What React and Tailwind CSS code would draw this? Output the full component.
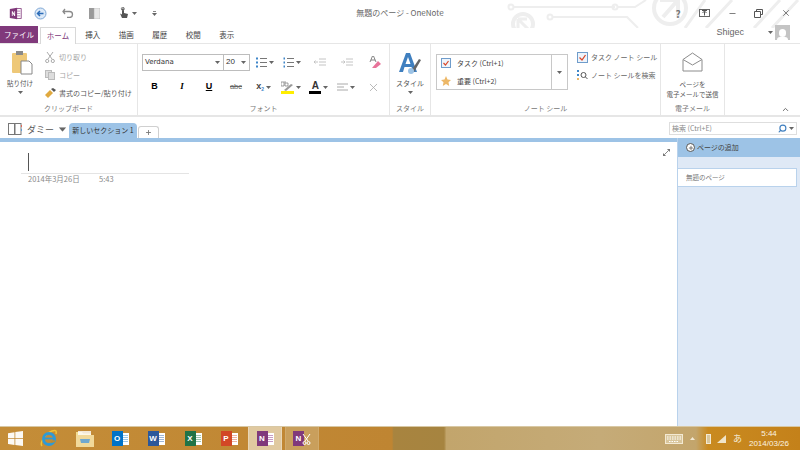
import React from 'react';
import { ChevronUp, Plus, X, Minus, Search } from 'lucide-react';

const Caret = ({ className = '' }) => (
  <svg width="5" height="3" viewBox="0 0 5 3" className={className}><path d="M0 0h5L2.500 3z" fill="#666" /></svg>
);

// circuit style decoration behind the title bar
const Circuit = () => (
  <svg className="absolute left-[480px] top-0 pointer-events-none" width="320" height="28" viewBox="0 0 320 28" fill="none" stroke="#eeeeee" strokeWidth="2">
    <circle cx="31" cy="7" r="2.500" />
    <path d="M34 7h101" />
    <circle cx="43" cy="24" r="10" strokeWidth="4" />
    <path d="M38 19h9M38 19v9M38 19l11 11" strokeWidth="3" />
    <circle cx="70" cy="17" r="2.500" />
    <path d="M73 17h74l11 11" />
    <circle cx="135" cy="7" r="2.500" />
    <path d="M138 7h17l11 -7" />
    <circle cx="190" cy="8" r="16" strokeWidth="4" />
    <path d="M180 0h18v18M198 0l-15 17" strokeWidth="4" />
    <path d="M225 0l-20 28M252 0l-26 28M300 0l-26 28M318 0l-26 28" strokeWidth="3" />
  </svg>
);

const OneNoteIcon = ({ size = 14 }) => (
  <svg width={size} height={size} viewBox="0 0 16 16">
    <rect x="8" y="2" width="7" height="12" fill="#fff" stroke="#80397b" strokeWidth="1" />
    <path d="M10 5h4M10 8h4M10 11h4" stroke="#c79cc5" strokeWidth="1.400" />
    <path d="M1 2.500l9-1.500v14l-9-1.500z" fill="#80397b" />
    <path d="M3.500 11V5.200h1l2 3.400V5.200h1V11h-1l-2-3.400V11z" fill="#fff" />
  </svg>
);

const TitleBar = () => (
  <div className="relative h-[26px] flex items-center">
    <Circuit />
    <div className="relative flex items-center w-[170px] h-full">
      <div className="w-[30px] flex justify-center"><OneNoteIcon size={13} /></div>
      <svg width="13" height="13" viewBox="0 0 13 13" className="ml-[4px]">
        <circle cx="6.500" cy="6.500" r="5.500" fill="#dce9f7" stroke="#7fa8d6" />
        <path d="M9.500 6.500H4M6 4L3.500 6.500 6 9" stroke="#2b6cb8" strokeWidth="1.500" fill="none" />
      </svg>
      <svg width="12" height="10" viewBox="0 0 12 10" className="ml-[15px]">
        <path d="M3 1L1 3.500 3 6M1 3.500h6.500a3 3 0 0 1 0 6H5" stroke="#8a8a8a" strokeWidth="1.300" fill="none" />
      </svg>
      <svg width="11" height="11" viewBox="0 0 11 11" className="ml-[15px]">
        <rect x="0" y="0" width="5" height="11" fill="#9a9a9a" />
        <rect x="5" y="0" width="6" height="11" fill="#e8e8e8" stroke="#aaa" strokeWidth="0.500" />
      </svg>
      <svg width="12" height="12" viewBox="0 0 12 12" className="ml-[18px]">
        <path d="M4 1.500v6L2 6.500 4 11h5l1-4-4-1V1.500z" fill="#555" />
        <circle cx="4.800" cy="1.800" r="1.500" fill="none" stroke="#777" />
      </svg>
      <Caret className="ml-[2px]" />
      <div className="ml-[15px] flex flex-col items-center gap-px">
        <div className="w-[3px] h-px bg-[#888]" />
        <Caret />
      </div>
    </div>
    <div className="relative flex-1 text-center text-[8px] text-[#666] whitespace-nowrap">無題のページ - OneNote</div>
    <div className="relative flex items-center justify-end w-[170px] h-full text-[#555]">
      <span className="w-[20px] text-center text-[10px] font-bold text-[#777] mr-[11px]">?</span>
      <svg width="11" height="8" viewBox="0 0 11 8" className="mr-[18px]">
        <rect x="0.500" y="0.500" width="10" height="7" fill="none" stroke="#666" />
        <path d="M5.500 6.500V2.500M3.500 4l2-2 2 2M3 1.500h5" stroke="#555" fill="none" />
      </svg>
      <Minus size={9} strokeWidth={2} className="mr-[17px] text-[#555]" />
      <svg width="9" height="9" viewBox="0 0 9 9" className="mr-[18px]">
        <path d="M2.500 2.500V.5h6v5h-2M.5 2.500h6v6h-6z" fill="none" stroke="#555" />
      </svg>
      <X size={10} strokeWidth={1.600} className="mr-[9px] text-[#444]" />
    </div>
  </div>
);

const Tabs = () => (
  <div className="relative h-[17px] flex items-end text-[7.500px] text-[#444]">
    <div className="w-[38px] h-[17px] bg-[#80397b] text-white flex items-center justify-center">ファイル</div>
    <div className="ml-[2px] w-[36px] h-[17px] bg-white border border-b-0 border-[#d8d8d8] text-[#80397b] flex items-center justify-center z-10 -mb-px">ホーム</div>
    {['挿入', '描画', '履歴', '校閲', '表示'].map((t) => (
      <div key={t} className="w-[33.500px] text-center h-[17px] flex items-center justify-center">{t}</div>
    ))}
    <div className="absolute right-[10px] -top-[1px] flex items-center text-[9px] text-[#666] font-['Liberation_Sans',sans-serif]">
      <span>Shigec</span>
      <Caret className="ml-[24px]" />
      <div className="ml-[2px] w-[15px] h-[15px] bg-[#c4c4c4] flex flex-col items-center justify-end overflow-hidden">
        <div className="w-[7px] h-[8px] rounded-full bg-white" />
        <div className="w-[11px] h-[3px] bg-white rounded-t" />
      </div>
    </div>
  </div>
);

const Group = ({ width, label, children }) => (
  <div style={{ width }} className="h-full border-r border-[#e6e6e6] flex flex-col shrink-0">
    <div className="flex-1 relative min-h-0">{children}</div>
    <div className="h-[12px] text-center text-[7px] text-[#777] leading-[11px] whitespace-nowrap">{label}</div>
  </div>
);

const SmallBtn = ({ icon, children, className = '' }) => (
  <div className={`flex items-center gap-[3px] h-[18px] text-[7px] whitespace-nowrap ${className}`}>
    <div className="w-[12px] flex justify-center">{icon}</div>
    <span>{children}</span>
  </div>
);

const Clipboard = () => (
  <Group width={138} label="クリップボード">
    <div className="flex h-full pt-[7px]">
      <div className="w-[40px] flex flex-col items-center text-[#555]">
        <svg width="22" height="24" viewBox="0 0 22 24" className="ml-[4px]">
          <rect x="1" y="2" width="15" height="20" fill="#eec878" rx="1" />
          <rect x="5" y="0" width="7" height="4" fill="#8a8a8a" />
          <path d="M10 10h8l3 3v10H10z" fill="#fff" stroke="#888" />
        </svg>
        <span className="text-[6.500px] mt-[4px] leading-[9px] whitespace-nowrap">貼り付け</span>
        <Caret className="mt-[3px]" />
      </div>
      <div className="flex flex-col ml-[4px] -mt-[3px]">
        <SmallBtn className="text-[#a5a5a5]" icon={
          <svg width="10" height="11" viewBox="0 0 10 11" fill="none" stroke="#aaa"><path d="M2 0l5 7M8 0L3 7" /><circle cx="2.200" cy="9" r="1.600" /><circle cx="7.800" cy="9" r="1.600" /></svg>
        }>切り取り</SmallBtn>
        <SmallBtn className="text-[#a5a5a5]" icon={
          <svg width="10" height="10" viewBox="0 0 10 10" fill="#ddd" stroke="#bbb"><rect x="0.500" y="0.500" width="6" height="7" /><rect x="3.500" y="2.500" width="6" height="7" /></svg>
        }>コピー</SmallBtn>
        <SmallBtn className="text-[#555]" icon={
          <svg width="11" height="10" viewBox="0 0 11 10"><path d="M0 7l5-5 3 3-5 5z" fill="#e0a93f" /><path d="M6 1l3 3 2-2-3-2z" fill="#555" /></svg>
        }>書式のコピー/貼り付け</SmallBtn>
      </div>
    </div>
  </Group>
);

const Cell = ({ children, caret }) => (
  <div className="w-[27.500px] h-[18px] flex items-center justify-center gap-[2px] text-[#444]">
    {children}
    {caret && <Caret />}
  </div>
);

const Bullets = ({ num }) => (
  <svg width="11" height="11" viewBox="0 0 11 11">
    {[1.500, 5.500, 9.500].map((y) => (
      <g key={y}>
        <rect x={num ? 0.500 : 0} y={y - 1} width={num ? 1.500 : 2} height="2" fill="#3f86c9" />
        <path d={`M4 ${y}h7`} stroke="#777" />
      </g>
    ))}
  </svg>
);

const Indent = ({ right }) => (
  <svg width="12" height="8" viewBox="0 0 12 8" stroke="#c4c4c4" fill="none">
    <path d="M5 1h7M5 4h7M5 7h7" />
    {right ? <path d="M0 4h4M2.500 2.500L4 4 2.500 5.500" /> : <path d="M4 4H0M1.500 2.500L0 4l1.500 1.500" />}
  </svg>
);

const Font = () => (
  <Group width={252} label="フォント">
    <div className="pt-[9px] pl-[4px]">
      <div className="flex items-center h-[18px]">
        <div className="w-[82px] h-[17px] border border-[#bdbdbd] flex items-center justify-between px-[2px] text-[7px] text-[#333] font-['DejaVu_Sans',sans-serif]">
          <span>Verdana</span><Caret className="mr-[1px]" />
        </div>
        <div className="w-[26px] h-[17px] border border-l-0 border-[#bdbdbd] flex items-center justify-between px-[2px] text-[8px] text-[#333] font-['Liberation_Sans',sans-serif]">
          <span>20</span><Caret className="mr-[1px]" />
        </div>
        <div className="ml-[1px] flex">
          <Cell caret><Bullets /></Cell>
          <Cell caret><Bullets num /></Cell>
          <Cell><Indent /></Cell>
          <Cell><Indent right /></Cell>
          <Cell>
            <svg width="12" height="12" viewBox="0 0 12 12">
              <path d="M3 12l6-7 3 3-5 4z" fill="#e8739a" />
              <path d="M1 6l2.500-6h1L7 6M2 4h4" stroke="#666" fill="none" strokeWidth="0.800" />
            </svg>
          </Cell>
        </div>
      </div>
      <div className="flex items-center mt-[7px] -ml-[1px] font-['Liberation_Sans',sans-serif]">
        <div className="flex w-[109px] text-[9px]">
          <div className="w-[27px] text-center font-bold">B</div>
          <div className="w-[28px] text-center italic font-['Liberation_Serif',serif] font-bold">I</div>
          <div className="w-[26px] text-center font-semibold underline">U</div>
          <div className="w-[28px] text-center line-through text-[7.500px] text-[#666] leading-[13px]">abc</div>
        </div>
        <Cell caret><span className="text-[9px] font-bold">x<sub className="text-[5px] text-[#3f86c9]">2</sub></span></Cell>
        <Cell caret>
          <svg width="13" height="13" viewBox="0 0 13 13">
            <rect x="0" y="10" width="13" height="3" fill="#ffee00" />
            <path d="M0 1h3v4H0zM4 0v5h3V2H4" stroke="#777" strokeWidth="0.700" fill="none" />
            <path d="M3 9l7-6 2 1-7 6z" fill="#999" />
          </svg>
        </Cell>
        <Cell caret>
          <div className="flex flex-col items-center">
            <span className="text-[10px] leading-[10px] font-semibold text-[#333]">A</span>
            <div className="w-[12px] h-[3px] bg-black" />
          </div>
        </Cell>
        <Cell caret>
          <svg width="11" height="8" viewBox="0 0 11 8" stroke="#aaa"><path d="M0 1h11M0 4h7M0 7h11" /></svg>
        </Cell>
        <Cell><X size={13} strokeWidth={1.500} className="text-[#aaa]" /></Cell>
      </div>
    </div>
  </Group>
);

const Style = () => (
  <Group width={41} label="スタイル">
    <div className="flex flex-col items-center pt-[8px] text-[7px] text-[#555]">
      <svg width="24" height="22" viewBox="0 0 24 22">
        <path d="M1 20L8 1h4l7 19h-4l-1.500-5H6.500L5 20zM7.500 12h5L10 5z" fill="#3f7fbf" />
        <path d="M13 19l8-12 2 1-7 12z" fill="#666" />
        <circle cx="13" cy="19" r="3" fill="#9cc3e6" />
      </svg>
      <span className="mt-[5px] leading-[9px] whitespace-nowrap">スタイル</span>
      <Caret className="mt-[3px]" />
    </div>
  </Group>
);

const NoteTags = () => (
  <Group width={230} label="ノート シール">
    <div className="flex pt-[10px] pl-[5px]">
      <div className="w-[132px] h-[36px] border border-[#c8c8c8] flex text-[7px] text-[#444] shrink-0">
        <div className="flex-1 flex flex-col justify-center gap-[1px] pl-[4px]">
          <div className="flex items-center gap-[6px] h-[17px]">
            <svg width="10" height="10" viewBox="0 0 10 10"><rect x="0.500" y="0.500" width="9" height="9" fill="#eef4fb" stroke="#6f9ccb" /><path d="M2.500 5l2 2 3-4" stroke="#d9482b" strokeWidth="1.200" fill="none" /></svg>
            <span className="whitespace-nowrap">タスク (Ctrl+1)</span>
          </div>
          <div className="flex items-center gap-[6px] h-[17px]">
            <svg width="10" height="10" viewBox="0 0 10 10"><path d="M5 0l1.500 3.500L10 4 7.500 6.300 8.200 10 5 8 1.800 10l.7-3.700L0 4l3.500-.5z" fill="#edb868" /></svg>
            <span className="whitespace-nowrap">重要 (Ctrl+2)</span>
          </div>
        </div>
        <div className="w-[16px] border-l border-[#c8c8c8] flex items-center justify-center"><Caret /></div>
      </div>
      <div className="ml-[9px] flex flex-col text-[7px] text-[#666] -mt-[6px] whitespace-nowrap">
        <div className="flex items-center gap-[3px] h-[18px]">
          <svg width="11" height="11" viewBox="0 0 11 11"><rect x="0.500" y="0.500" width="10" height="10" fill="#eef4fb" stroke="#6f9ccb" /><path d="M2.500 5.500l2.500 2.500 3.500-5" stroke="#d9482b" strokeWidth="1.300" fill="none" /></svg>
          <span>タスク ノート シール</span>
        </div>
        <div className="flex items-center gap-[3px] h-[18px]">
          <svg width="11" height="11" viewBox="0 0 11 11"><rect x="0" y="0" width="2" height="2" fill="#3f86c9" /><rect x="0" y="4" width="2" height="2" fill="#3f86c9" /><rect x="0" y="8" width="2" height="2" fill="#edb868" /><circle cx="6.500" cy="5" r="2.500" fill="none" stroke="#555" /><path d="M8.500 7l2 2" stroke="#555" /></svg>
          <span>ノート シールを検索</span>
        </div>
      </div>
    </div>
  </Group>
);

const Email = () => (
  <Group width={64} label="電子メール">
    <div className="flex flex-col items-center pt-[8px] text-[6.500px] text-[#555] leading-[9.500px] whitespace-nowrap">
      <svg width="21" height="20" viewBox="0 0 21 20" fill="#fff" stroke="#8c8c8c">
        <path d="M1 7.500L10.500 1 20 7.500V19H1z" />
        <path d="M1 7.500L10.500 13 20 7.500" />
      </svg>
      <span className="mt-[8px]">ページを</span>
      <span>電子メールで送信</span>
    </div>
  </Group>
);

const Ribbon = () => (
  <div className="relative h-[74px] border-t border-b-2 border-[#e6e6e6] flex">
    <Clipboard />
    <Font />
    <Style />
    <NoteTags />
    <Email />
    <ChevronUp size={9} strokeWidth={2.500} className="absolute right-[10px] bottom-[1px] text-[#666]" />
  </div>
);

const SectionRow = () => (
  <div className="h-[21px] flex items-end bg-white">
    <div className="w-[69px] h-full flex items-center pl-[8px] pt-[3px] text-[#555] whitespace-nowrap">
      <svg width="14" height="12" viewBox="0 0 14 12">
        <rect x="0.500" y="0.500" width="6" height="11" fill="#fff" stroke="#777" />
        <rect x="7" y="0.500" width="6" height="11" fill="#fff" stroke="#777" />
        <rect x="13" y="2" width="1" height="2" fill="#e26b5a" />
        <rect x="13" y="6" width="1" height="2" fill="#5f9bd5" />
      </svg>
      <span className="ml-[5px] text-[9px] leading-none">ダミー</span>
      <Caret className="ml-[6px] scale-150" />
    </div>
    <div className="w-[68px] h-[15px] bg-[#9dc3e6] rounded-t-[4px] text-[7px] text-[#333] flex items-center justify-center whitespace-nowrap">新しいセクション 1</div>
    <div className="w-[21px] h-[12px] ml-[1px] border border-b-0 border-[#d0d0d0] rounded-t-[3px] flex items-center justify-center">
      <Plus size={7} strokeWidth={3} className="text-[#777]" />
    </div>
    <div className="flex-1" />
    <div className="w-[128px] h-[13px] mb-[3px] mr-[3px] border border-[#dedede] flex items-center justify-between px-[2px] text-[7px] text-[#888] whitespace-nowrap">
      <span>検索 (Ctrl+E)</span>
      <div className="flex items-center gap-[2px]">
        <Search size={9} strokeWidth={3} className="text-[#3f7fbf] -scale-x-100" />
        <Caret />
      </div>
    </div>
  </div>
);

const Page = () => (
  <div className="relative flex-1 bg-white border-t-[4px] border-[#9dc3e6]">
    <div className="ml-[21px] mt-[11px] w-[168px]">
      <div className="ml-[7px] w-px h-[18px] bg-[#555]" />
      <div className="mt-[2px] h-px bg-[#e4e4e4]" />
      <div className="flex text-[7.500px] text-[#8a8a8a] ml-[7px] leading-[10px] whitespace-nowrap">
        <span className="w-[71px]">2014年3月26日</span>
        <span>5:43</span>
      </div>
    </div>
    <svg width="7" height="7" viewBox="0 0 8 8" className="absolute right-[7px] top-[7px]" stroke="#777" fill="#777">
      <path d="M1.500 6.500l5-5" /><path d="M4.500 0H8v3.500zM0 4.500V8h3.500z" stroke="none" />
    </svg>
  </div>
);

const PageList = () => (
  <div className="w-[123px] bg-[#dfe9f6] border-l border-[#b9d2ec] flex flex-col">
    <div className="h-[19px] bg-[#9dc3e6] flex items-center pl-[8px] gap-[2px] text-[7px] text-[#444] whitespace-nowrap">
      <div className="w-[9px] h-[9px] rounded-full border border-[#555] bg-white flex items-center justify-center">
        <Plus size={6} strokeWidth={3} className="text-[#555]" />
      </div>
      <span>ページの追加</span>
    </div>
    <div className="mt-[11px] mr-[3px] h-[19px] bg-white border border-[#b9d2ec] border-l-0 flex items-center pl-[8px] text-[6.500px] text-[#777] whitespace-nowrap">無題のページ</div>
  </div>
);

const AppTile = ({ bg, letter, lines = '#fff', children }) => (
  <div className="relative w-[17px] h-[15px] flex items-center">
    <div className="absolute right-0 top-[1.500px] w-[10px] h-[12px] flex flex-col justify-center gap-[1px] px-[1px] bg-white">
      {[0, 1, 2, 3].map((i) => <div key={i} className="h-px" style={{ background: lines }} />)}
    </div>
    <div style={{ background: bg }} className="relative w-[11px] h-[15px] flex items-center justify-center text-white text-[8px] font-bold font-['Liberation_Sans',sans-serif]">{letter}</div>
    {children}
  </div>
);

const TaskSlot = ({ children, w = 36, active, open }) => (
  <div
    style={{ width: w }}
    className={`h-full flex items-center justify-center shrink-0 ${active ? 'bg-[#e0c9a0] border-x border-[#e8d6b6]' : open ? 'bg-[#c99f5c] border-x border-[#d0aa6c]' : ''}`}
  >
    {children}
  </div>
);

const Taskbar = () => (
  <div className="h-[24px] flex items-center border-t border-[#d8c8a4] bg-[linear-gradient(90deg,#c48d38_0%,#bf8532_49%,#a8843f_49.2%,#a68440_55.5%,#c2a56c_55.8%,#c5ab78_75%,#c3a56c_87%,#c98a20_88.5%,#c4811a_100%)]">
    <TaskSlot w={31}>
      <svg width="15" height="15" viewBox="0 0 15 15" fill="#fff" opacity="0.95">
        <path d="M0 2.200l6.500-1v6H0zM7.300 1l7.700-1v7.200H7.300zM0 8h6.500v6L0 13zM7.300 8H15v7l-7.700-1z" />
      </svg>
    </TaskSlot>
    <TaskSlot w={34}>
      <svg width="19" height="19" viewBox="0 0 19 19" fill="none">
        <path d="M3 17C1 15 4 6 13 2c3-1 5-1 4 3" stroke="#f2c230" strokeWidth="1.500" />
        <circle cx="10" cy="10" r="5.500" stroke="#2e9ad6" strokeWidth="3" />
        <path d="M6 9.500h9" stroke="#2e9ad6" strokeWidth="1.800" />
        <path d="M12 13l4-1" stroke="#bd8b30" strokeWidth="2" />
      </svg>
    </TaskSlot>
    <TaskSlot w={38}>
      <svg width="19" height="17" viewBox="0 0 19 17">
        <path d="M1 2h6l1 1.500h8V8H1z" fill="#f2dc8e" />
        <rect x="3" y="1" width="13" height="4" fill="#fff" opacity="0.8" />
        <rect x="1" y="5" width="18" height="12" fill="#f1d99a" />
        <path d="M5 9h10l-1 4H6z" fill="#6fa8d0" />
      </svg>
    </TaskSlot>
    <TaskSlot w={34}><AppTile bg="#0072c6" letter="O" lines="#9cc7e8" /></TaskSlot>
    <TaskSlot w={38}><AppTile bg="#2b579a" letter="W" lines="#9fb6d6" /></TaskSlot>
    <TaskSlot w={36}><AppTile bg="#217346" letter="X" lines="#9cc7ae" /></TaskSlot>
    <TaskSlot w={36}><AppTile bg="#d24726" letter="P" lines="#eeb3a3" /></TaskSlot>
    <div className="w-[1px]" />
    <TaskSlot w={34} active><AppTile bg="#80397b" letter="N" lines="#c79cc5" /></TaskSlot>
    <div className="w-[3px]" />
    <TaskSlot w={34} open>
      <div className="relative w-[18px] h-[15px]">
        <div className="w-[11px] h-[15px] bg-[#80397b] text-white text-[8px] font-bold flex items-center justify-center font-['Liberation_Sans',sans-serif]">N</div>
        <svg width="9" height="11" viewBox="0 0 9 11" className="absolute right-0 top-[3px]" fill="none" stroke="#fff">
          <path d="M1 0l5 7M8 0L3 7" /><circle cx="2.500" cy="9" r="1.500" /><circle cx="6.500" cy="9" r="1.500" />
        </svg>
      </div>
    </TaskSlot>
    <div className="flex-1" />
    <svg width="18" height="10" viewBox="0 0 18 10" className="mr-[7px]">
      <rect x="0.500" y="0.500" width="17" height="9" fill="#d9c69c" stroke="#f3e9d3" />
      <path d="M2 3h14M2 5h14M4 7.500h10" stroke="#fff" strokeDasharray="1.500 1" />
    </svg>
    <svg width="5" height="3" viewBox="0 0 5 3" className="mr-[11px]"><path d="M0 3h5L2.500 0z" fill="#f3e9d3" /></svg>
    <div className="w-[5px] h-[10px] border border-[#f3e9d3] bg-[#d9c69c] mr-[6px]" />
    <svg width="9" height="8" viewBox="0 0 9 8" className="mr-[7px]"><path d="M0 8L9 0v8z" fill="#f0e4c8" /></svg>
    <span className="text-[9px] text-[#f5eddc] mr-[5px]">あ</span>
    <div className="w-[44px] mr-[9px] flex flex-col items-center text-[8px] leading-[10px] text-[#fbf3e2] font-['Liberation_Sans',sans-serif] whitespace-nowrap">
      <span>5:44</span>
      <span>2014/03/26</span>
    </div>
  </div>
);

export default function App() {
  return (
    <div className="w-[800px] h-[450px] flex flex-col overflow-hidden bg-white font-['Noto_Sans_CJK_JP','Liberation_Sans',sans-serif]">
      <TitleBar />
      <Tabs />
      <Ribbon />
      <SectionRow />
      <div className="flex-1 flex min-h-0">
        <Page />
        <PageList />
      </div>
      <Taskbar />
    </div>
  );
}
